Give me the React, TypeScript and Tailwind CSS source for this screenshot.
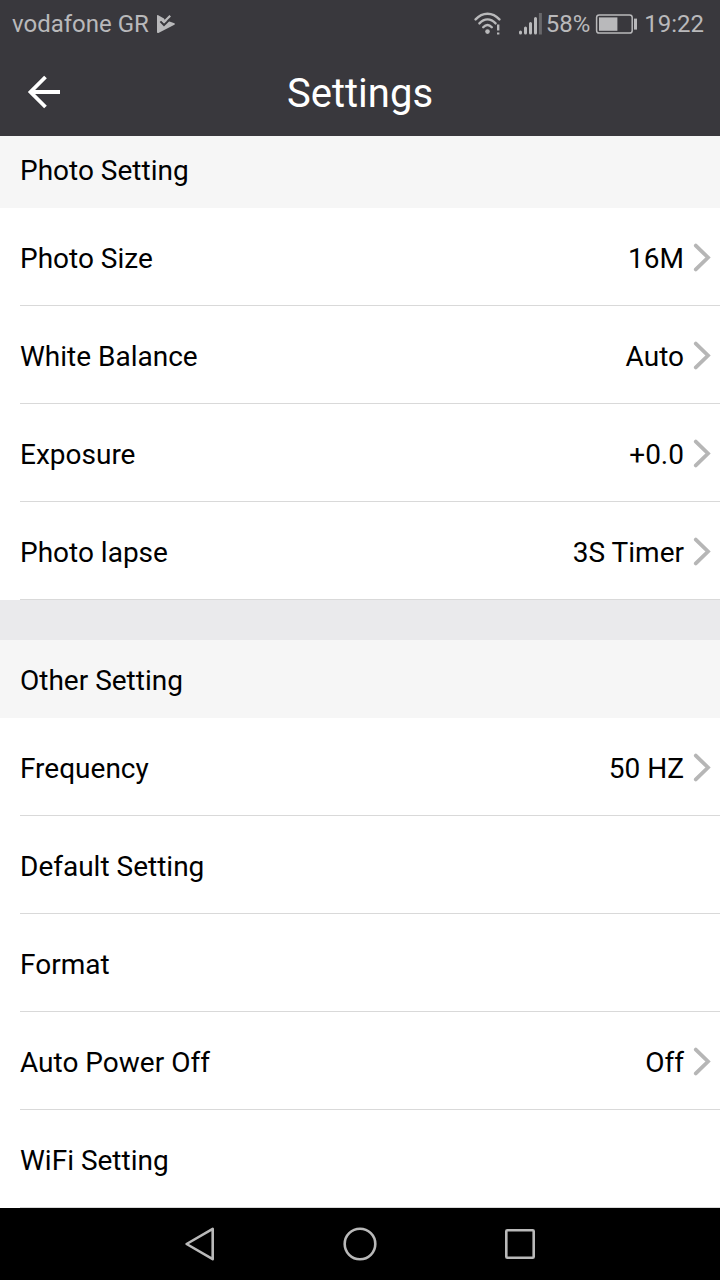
import React from "react";

interface Setting {
  label: string;
  value?: string;
}

const photoSettings: Setting[] = [
  { label: "Photo Size", value: "16M" },
  { label: "White Balance", value: "Auto" },
  { label: "Exposure", value: "+0.0" },
  { label: "Photo lapse", value: "3S Timer" },
];

const otherSettings: Setting[] = [
  { label: "Frequency", value: "50 HZ" },
  { label: "Default Setting" },
  { label: "Format" },
  { label: "Auto Power Off", value: "Off" },
  { label: "WiFi Setting" },
];

const StatusBar: React.FC = () => (
  <div className="flex h-12 items-center justify-between pl-3 pr-4 text-2xl leading-8 text-[#b9b9bb]">
    <div className="flex items-center gap-1">
      <span>vodafone GR</span>
      <svg className="h-5 w-6" viewBox="0 0 24 20" fill="currentColor">
        <path d="M4 1.8 Q4 0.6 5.2 1.2 L11 4.4 L11.6 5.8 L21.4 9.2 Q22.6 10 21.4 10.8 L5.4 18.9 Q4 19.4 4 18 Z" />
        <path
          d="M7.4 7.4 L11 11 L18.6 3.6"
          fill="none"
          stroke="#39383d"
          strokeWidth="2"
        />
        <path
          d="M8.2 4.8 L11.2 7.8 L17.2 1.8"
          fill="none"
          stroke="currentColor"
          strokeWidth="2.2"
        />
      </svg>
    </div>
    <div className="flex items-center">
      {/* wifi */}
      <svg className="mr-4 h-6 w-7" viewBox="0 0 28 24" fill="none">
        <g stroke="currentColor" strokeWidth="2.4" strokeLinecap="round">
          <path d="M1.6 7.4 C8.5 -0.2 18.5 -0.2 25.4 7.4" />
          <path d="M5.4 11.4 C10.4 6 16.6 6 21.6 11.4" />
          <path d="M9.2 15.2 C12 12.2 15 12.2 17.8 15.2" />
        </g>
        <circle cx="13.5" cy="19.6" r="2.3" fill="currentColor" />
        <path
          d="M24.2 12.5 V18.5 M24.2 20.4 V22.6"
          stroke="currentColor"
          strokeWidth="2.4"
        />
      </svg>
      {/* signal strength */}
      <svg className="mr-1 h-6 w-6" viewBox="0 0 24 24" fill="none">
        <g stroke="currentColor" strokeWidth="3" strokeLinecap="round">
          <path d="M2.5 20 V21 M7.5 16 V21 M12.5 11.5 V21 M17.5 6.5 V21" />
        </g>
        <path d="M22.4 1 V22.5" stroke="#68686b" strokeWidth="3" />
      </svg>
      <span>58%</span>
      {/* battery */}
      <svg className="ml-1 mr-1.5 h-5 w-11" viewBox="0 0 44 20" fill="none">
        <rect
          x="2.6"
          y="0.9"
          width="35.6"
          height="18.2"
          rx="2.6"
          stroke="currentColor"
          strokeWidth="1.5"
        />
        <rect x="5" y="3.4" width="18.4" height="13.4" fill="currentColor" />
        <rect x="40" y="4.6" width="3" height="11" fill="currentColor" />
      </svg>
      <span>19:22</span>
    </div>
  </div>
);

const Header: React.FC = () => (
  <header className="bg-[#39383d]">
    <StatusBar />
    <div className="grid h-[88px] grid-cols-[88px_1fr_88px] items-center">
      <button
        type="button"
        aria-label="Back"
        className="flex h-full items-center justify-center"
      >
        <svg
          className="h-9 w-9"
          viewBox="0 0 36 36"
          fill="none"
          stroke="#fff"
          strokeWidth="3.8"
        >
          <path d="M34 18 H4.5 M19.5 3 L4.5 18 L19.5 33" />
        </svg>
      </button>
      <h1 className="pt-1 text-center text-[40px] leading-12 text-white">
        Settings
      </h1>
    </div>
  </header>
);

const SettingRow: React.FC<Setting> = ({ label, value }) => (
  <li className="pl-5">
    <button
      type="button"
      className="flex h-[98px] w-full items-center justify-between border-b border-[#d9d9d9] pr-2 pt-1 text-left"
    >
      <span>{label}</span>
      {value && (
        <span className="flex items-center gap-2">
          {value}
          <svg
            className="h-8 w-5"
            viewBox="0 0 20 32"
            fill="none"
            stroke="#b6b6b6"
            strokeWidth="3.8"
            strokeLinecap="round"
          >
            <path d="M3.8 2.6 L16 14.5 L3.8 26.4" />
          </svg>
        </span>
      )}
    </button>
  </li>
);

const SettingList: React.FC<{ settings: Setting[] }> = ({ settings }) => (
  <ul>
    {settings.map((s) => (
      <SettingRow key={s.label} label={s.label} value={s.value} />
    ))}
  </ul>
);

const NavBar: React.FC = () => (
  <nav className="flex h-18 items-center justify-center bg-black text-[#b9b9b9]">
    <button type="button" aria-label="Back" className="flex w-40 justify-center">
      <svg
        className="h-9 w-9"
        viewBox="0 0 36 36"
        fill="none"
        stroke="currentColor"
        strokeWidth="2.6"
        strokeLinejoin="round"
      >
        <path d="M4.6 18 L30.7 2.8 V33.2 Z" />
      </svg>
    </button>
    <button type="button" aria-label="Home" className="flex w-40 justify-center">
      <svg
        className="h-9 w-9"
        viewBox="0 0 36 36"
        fill="none"
        stroke="currentColor"
        strokeWidth="2.6"
      >
        <circle cx="18" cy="18" r="15.3" />
      </svg>
    </button>
    <button
      type="button"
      aria-label="Recent apps"
      className="flex w-40 justify-center"
    >
      <svg
        className="h-9 w-9"
        viewBox="0 0 36 36"
        fill="none"
        stroke="currentColor"
        strokeWidth="2.6"
      >
        <rect x="4.3" y="4.3" width="27.4" height="27.4" rx="1" />
      </svg>
    </button>
  </nav>
);

export default function App() {
  return (
    <div className="flex min-h-screen flex-col bg-white font-['Roboto',sans-serif] text-[28px] leading-9 text-black">
      <Header />
      <main className="flex-1">
        <section>
          <h2 className="bg-[#f6f6f6] px-5 pb-[19px] pt-[17px]">
            Photo Setting
          </h2>
          <SettingList settings={photoSettings} />
        </section>
        <section className="border-t-40 border-[#eaeaec]">
          <h2 className="bg-[#f6f6f6] px-5 pb-[19px] pt-[23px]">
            Other Setting
          </h2>
          <SettingList settings={otherSettings} />
        </section>
      </main>
      <NavBar />
    </div>
  );
}
